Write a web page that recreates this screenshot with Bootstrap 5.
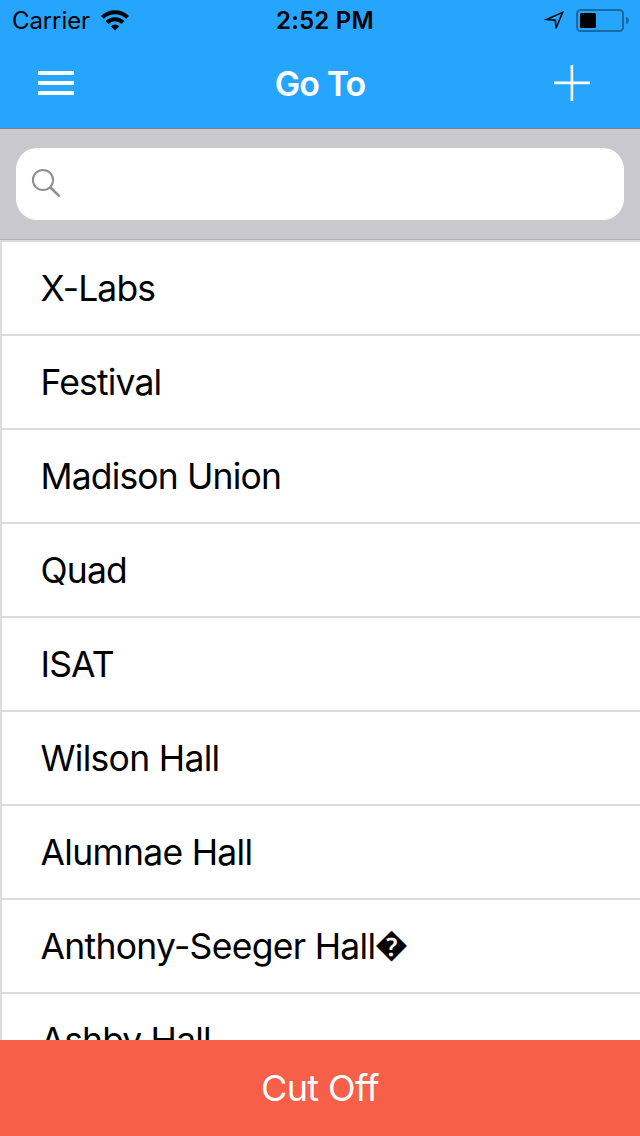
<!DOCTYPE html>
<html lang="en">
<head>
<meta charset="utf-8">
<meta name="viewport" content="width=device-width, initial-scale=1">
<title>Go To</title>
<link href="https://cdn.jsdelivr.net/npm/bootstrap@5.3.0/dist/css/bootstrap.min.css" rel="stylesheet">
<style>
  body { font-family: Inter, "Liberation Sans", sans-serif; color: #000; height: 1136px; background: #fff; font-variant-ligatures: none; }
  svg { display: block; }
  .top { background: #26a5ff; height: 129px; border-bottom: 1px solid #7d8084; }
  .status { height: 40px; font-size: 24px; line-height: 40px; padding: 0 11px 0 12px; }
  .status span { padding-top: 1px; }
  .status .carrier { letter-spacing: -.1px; width: 264px; gap: 9px; }
  .status .clock { font-weight: 600; letter-spacing: .2px; }
  .titlebar { height: 86px; padding: 0 50px 0 38px; }
  .titlebar h1 { font-size: 34px; font-weight: 600; line-height: 86px; letter-spacing: -.9px; padding: 2px 0 0 12px; }
  .search { background: #c9c8ce; height: 111px; padding: 19px 16px; border-bottom: 1px solid #b0afb4; }
  .search .field { height: 72px; border-radius: 21px; padding-left: 15px; padding-bottom: 3px; }
  .places { border-left: 2px solid #dcdcdc; }
  .places .list-group-item { height: 94px; flex: none; border: 0; border-top: 2px solid #dcdcdc; padding: 0 0 0 38.5px; color: #000; font-size: 35.5px; line-height: 93px; letter-spacing: -.85px; white-space: nowrap; }
  .places .list-group-item.loose { letter-spacing: -.7px; }
  .places .unknown { font-size: 33px; letter-spacing: 0; line-height: 1; vertical-align: 3px; -webkit-text-stroke: .4px #000; }
  .cutoff { height: 96px; background: #f75f49; font-size: 36px; line-height: 96px; letter-spacing: -.6px; }
</style>
</head>
<body class="d-flex flex-column overflow-hidden">
<header class="top flex-shrink-0">
  <div class="status d-flex align-items-center">
    <div class="carrier d-flex align-items-center">
      <span>Carrier</span>
      <svg width="32" height="24" viewBox="0 0 32 24" fill="none" stroke="#000" stroke-width="4"><path d="M3.4 9.4A18 18 0 0 1 28.6 9.4M8 14.5A11.3 11.3 0 0 1 24 14.5"/><path d="M11.7 18.2a6.2 6.2 0 0 1 8.6 0L16 22.5z" fill="#000" stroke="none"/></svg>
    </div>
    <span class="clock">2:52 PM</span>
    <div class="ms-auto d-flex align-items-center gap-2">
      <svg width="24" height="24" viewBox="0 0 24 24" fill="none" stroke="#000" stroke-width="1.5"><path d="M2.6 11.5L18.6 4.4L12 20.2L11.3 12.3z"/></svg>
      <svg width="53" height="24" viewBox="0 0 53 24"><rect x="1" y="2" width="46" height="21" rx="3.5" fill="none" stroke="#1a699f" stroke-width="2"/><rect x="4" y="5" width="16" height="15" rx="1.5"/><path d="M50 8.5q6 4 0 8z" fill="#1a699f"/></svg>
    </div>
  </div>
  <nav class="titlebar d-flex align-items-center justify-content-between">
    <svg width="36" height="24" viewBox="0 0 36 24" fill="#fff"><path d="M0 0h36v4H0zM0 10h36v4H0zM0 20h36v4H0z"/></svg>
    <h1 class="text-white m-0">Go To</h1>
    <svg width="36" height="36" viewBox="0 0 36 36" fill="#fff"><path d="M0 16.6h36v2.6H0zM16.6 0h2.6v36h-2.6z"/></svg>
  </nav>
</header>
<div class="search flex-shrink-0">
  <div class="field bg-white d-flex align-items-center">
    <svg width="30" height="30" viewBox="0 0 30 30" fill="none" stroke="#8e8e93"><circle cx="12" cy="12" r="10.1" stroke-width="2"/><path d="M19.5 19.5l8.3 8.1" stroke-width="2.7" stroke-linecap="round"/></svg>
  </div>
</div>
<main class="flex-grow-1 overflow-hidden">
  <ul class="places list-group rounded-0">
    <li class="list-group-item">X-Labs</li>
    <li class="list-group-item">Festival</li>
    <li class="list-group-item">Madison Union</li>
    <li class="list-group-item">Quad</li>
    <li class="list-group-item">ISAT</li>
    <li class="list-group-item loose">Wilson Hall</li>
    <li class="list-group-item loose">Alumnae Hall</li>
    <li class="list-group-item loose">Anthony-Seeger Hall<span class="unknown">&#xFFFD;</span></li>
    <li class="list-group-item">Ashby Hall</li>
  </ul>
</main>
<footer class="cutoff flex-shrink-0 text-white text-center">Cut Off</footer>
<script src="https://cdn.jsdelivr.net/npm/bootstrap@5.3.0/dist/js/bootstrap.bundle.min.js"></script>
</body>
</html>
